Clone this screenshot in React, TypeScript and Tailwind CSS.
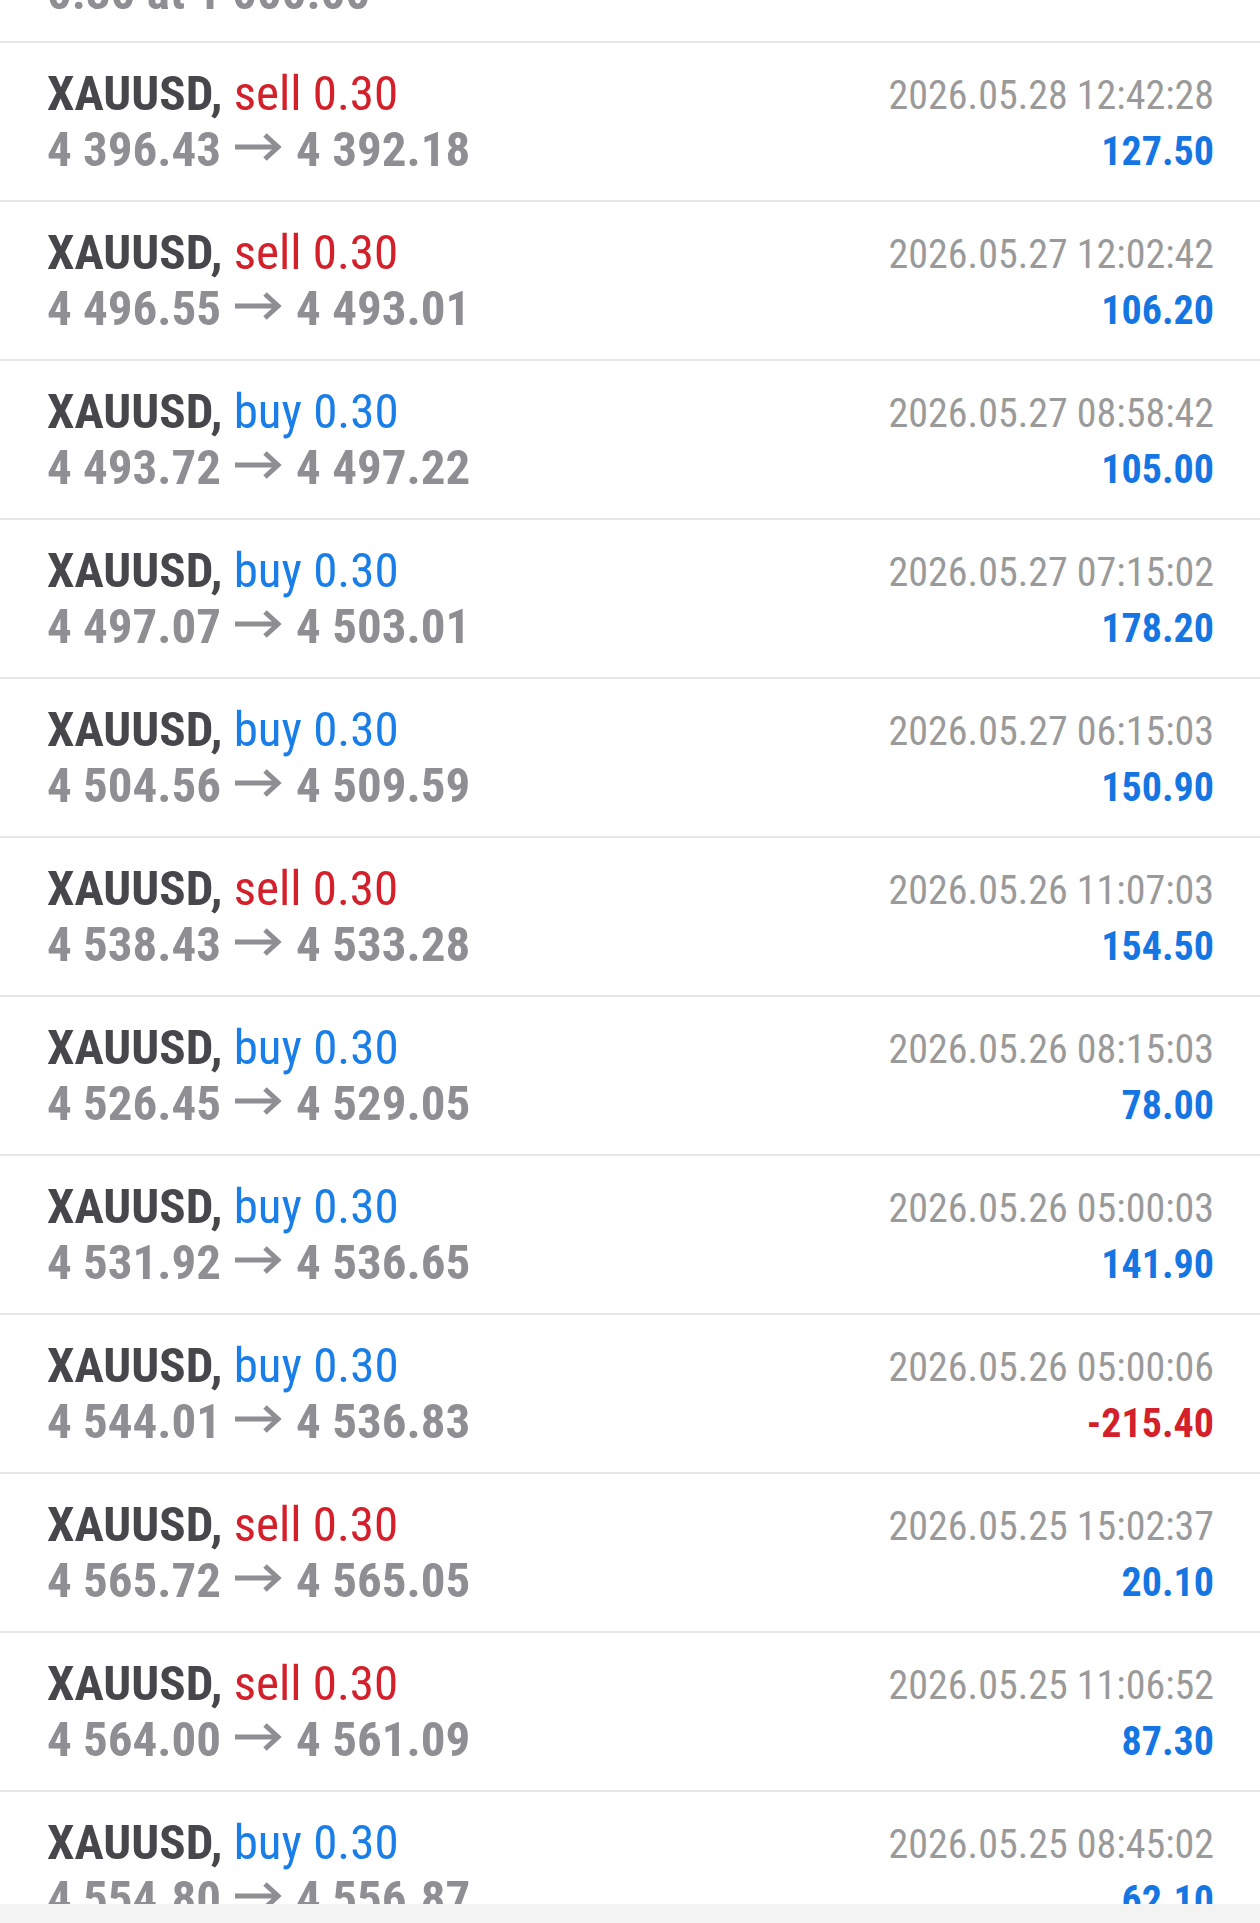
type Deal = {
  side: 'buy' | 'sell';
  open: string;
  close: string;
  time: string;
  profit: string;
};

const deals: Deal[] = [
  { side: 'sell', open: '4 396.43', close: '4 392.18', time: '2026.05.28 12:42:28', profit: '127.50' },
  { side: 'sell', open: '4 496.55', close: '4 493.01', time: '2026.05.27 12:02:42', profit: '106.20' },
  { side: 'buy', open: '4 493.72', close: '4 497.22', time: '2026.05.27 08:58:42', profit: '105.00' },
  { side: 'buy', open: '4 497.07', close: '4 503.01', time: '2026.05.27 07:15:02', profit: '178.20' },
  { side: 'buy', open: '4 504.56', close: '4 509.59', time: '2026.05.27 06:15:03', profit: '150.90' },
  { side: 'sell', open: '4 538.43', close: '4 533.28', time: '2026.05.26 11:07:03', profit: '154.50' },
  { side: 'buy', open: '4 526.45', close: '4 529.05', time: '2026.05.26 08:15:03', profit: '78.00' },
  { side: 'buy', open: '4 531.92', close: '4 536.65', time: '2026.05.26 05:00:03', profit: '141.90' },
  { side: 'buy', open: '4 544.01', close: '4 536.83', time: '2026.05.26 05:00:06', profit: '-215.40' },
  { side: 'sell', open: '4 565.72', close: '4 565.05', time: '2026.05.25 15:02:37', profit: '20.10' },
  { side: 'sell', open: '4 564.00', close: '4 561.09', time: '2026.05.25 11:06:52', profit: '87.30' },
  { side: 'buy', open: '4 554.80', close: '4 556.87', time: '2026.05.25 08:45:02', profit: '62.10' },
];

// the → between open and close price is drawn, the font's glyph is too small
function Arrow() {
  return (
    <svg
      width="47"
      height="30"
      viewBox="0 0 47 30"
      className="mx-[14px] inline-block align-[4px]"
      fill="none"
      stroke="#8e8e93"
      strokeWidth="5"
    >
      <path d="M0 15H43" />
      <path d="M30 3L43 15L30 27" />
    </svg>
  );
}

function DealRow({ deal }: { deal: Deal }) {
  const loss = deal.profit.startsWith('-');
  return (
    <div className="flex h-[159px] shrink-0 justify-between border-b-2 border-[#e6e6e6] pl-[47px] pr-[46px] pt-[23px] leading-[56px]">
      <div>
        <div className="text-[49px]">
          <span className="font-bold text-[#46464b]">XAUUSD,</span>{' '}
          <span className={deal.side === 'sell' ? 'text-[#d3202a]' : 'text-[#1a7ee8]'}>
            {deal.side} 0.30
          </span>
        </div>
        <div className="whitespace-nowrap text-[49px] font-bold text-[#8e8e93]">
          {deal.open}
          <Arrow />
          {deal.close}
        </div>
      </div>
      <div className="pt-[2px] text-right">
        <div className="text-[40px] text-[#9a9a9a]">{deal.time}</div>
        <div className={`text-[40px] font-bold ${loss ? 'text-[#d3202a]' : 'text-[#1576e3]'}`}>
          {deal.profit}
        </div>
      </div>
    </div>
  );
}

export default function App() {
  return (
    <div
      className="flex h-[1923px] w-[1260px] flex-col overflow-hidden bg-white font-stretch-condensed"
      style={{ fontFamily: '"Roboto Condensed", Roboto, "Liberation Sans", sans-serif' }}
    >
      <div className="flex h-[1904px] flex-col overflow-hidden">
        {/* tail of the previous entry, scrolled off the top */}
        <div className="h-[43px] shrink-0 overflow-hidden border-b-2 border-[#e6e6e6] pl-[47px]">
          <div className="-mt-[35px] text-[49px] font-bold leading-[56px] text-[#8e8e93]">
            0.30 at 1 000.00
          </div>
        </div>
        {deals.map((d, i) => (
          <DealRow key={i} deal={d} />
        ))}
      </div>
      <div className="h-[19px] shrink-0 bg-[#f3f3f3]" />
    </div>
  );
}
